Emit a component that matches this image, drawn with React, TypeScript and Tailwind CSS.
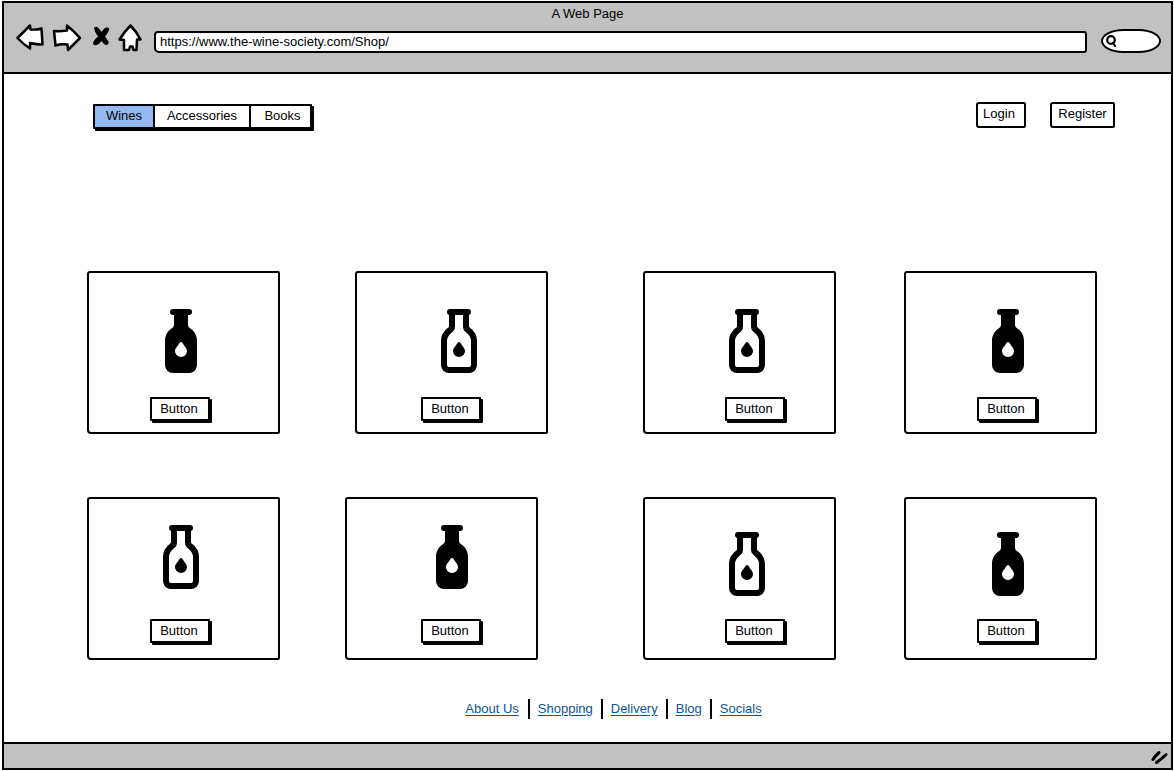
type Product = {
  id: number;
  filled: boolean;
  bottle: string;
  button: string;
};

const firstRow: Product[] = [
  { id: 1, filled: true, bottle: "mt-9 ml-[74px]", button: "mt-6 ml-[61px]" },
  { id: 2, filled: false, bottle: "mt-9 ml-[84px]", button: "mt-6 ml-16" },
  { id: 3, filled: false, bottle: "mt-9 ml-[84px]", button: "mt-6 ml-20" },
  { id: 4, filled: true, bottle: "mt-9 ml-[84px]", button: "mt-6 ml-[71px]" },
];

const secondRow: Product[] = [
  { id: 5, filled: false, bottle: "mt-[26px] ml-[74px]", button: "mt-[30px] ml-[61px]" },
  { id: 6, filled: true, bottle: "mt-[26px] ml-[87px]", button: "mt-[30px] ml-[74px]" },
  { id: 7, filled: false, bottle: "mt-[33px] ml-[84px]", button: "mt-[23px] ml-20" },
  { id: 8, filled: true, bottle: "mt-[33px] ml-[84px]", button: "mt-[23px] ml-[71px]" },
];

const links = ["About Us", "Shopping", "Delivery", "Blog", "Socials"];

const DROP = "M16.8 33.6a1.4 1.4 0 0 1 2.4 0C20.5 36.5 24 39 24 42.2a6 5.8 0 0 1-12 0C12 39 15.5 36.5 16.8 33.6Z";

function Bottle({ filled, className }: { filled: boolean; className: string }) {
  return (
    <svg viewBox="0 0 36 64" aria-hidden="true" className={`h-16 w-9 shrink-0 ${className}`}>
      {filled ? (
        <>
          <rect x="7" y="0" width="22" height="6" rx="3" />
          <path d="M11 3V15.5C11 17.5 10 18.5 8.5 19.5C4 22.5 2 27 2 32V56a8 8 0 0 0 8 8H26a8 8 0 0 0 8-8V32C34 27 32 22.5 27.5 19.5C26 18.5 25 17.5 25 15.5V3Z" />
          <path d={DROP} fill="#fff" />
        </>
      ) : (
        <>
          <rect x="6" y="0" width="24" height="6" rx="3" />
          <path
            d="M11 3V17.5C11 19 10.5 20 9 21C5 24 3 27.5 3 32V56a5 5 0 0 0 5 5H28a5 5 0 0 0 5-5V32C33 27.5 31 24 27 21C25.5 20 25 19 25 17.5V3"
            fill="none"
            stroke="#000"
            strokeWidth="6"
          />
          <path d={DROP} />
        </>
      )}
    </svg>
  );
}

function Card({ product }: { product: Product }) {
  return (
    <li className="flex h-[163px] w-[193px] flex-col items-start rounded-[3px_2px_2px_4px] border-2 border-black bg-white">
      <Bottle filled={product.filled} className={product.bottle} />
      <button
        type="button"
        className={`h-6 w-[60px] rounded-[1px] border-2 border-black bg-white pr-0.5 text-center leading-5 shadow-[2px_2px_0_0_#000] ${product.button}`}
      >
        Button
      </button>
    </li>
  );
}

function ToolbarIcons() {
  return (
    <div className="flex items-center">
      <button type="button" aria-label="Back" className="w-9">
        <svg viewBox="0 0 30 28" className="h-7 w-[30px]" fill="#fff" stroke="#000" strokeWidth="2.5" strokeLinejoin="round">
          <path d="M1.5 14L14 1.5L14.5 5.5Q21 6 25.5 4.5L26.5 20.5Q20 20.5 14 19L14 24.5Q7 20 1.5 14Z" />
        </svg>
      </button>
      <button type="button" aria-label="Forward" className="w-[38px]">
        <svg viewBox="0 0 30 28" className="h-7 w-[30px]" fill="#fff" stroke="#000" strokeWidth="2.5" strokeLinejoin="round">
          <path d="M2 7Q8 7.5 15 6.5V1.5Q22 7 28 14L16 26L15.5 20.5Q9 19.5 3.5 21.5Z" />
        </svg>
      </button>
      <button type="button" aria-label="Stop" className="w-7">
        <svg viewBox="0 0 20 28" className="h-7 w-5">
          <path d="M4 4Q6.5 1.500 9 4.500L11.500 8Q14 3.500 17 3.500Q20 3.500 19 6.500Q17.500 9.500 15 12.500L18.500 17.500Q19 21 16 21Q13.500 20 11.500 17Q9 20.500 6.500 21Q3 22 3 18.500Q4.500 15 8 12.500Q4.500 8.500 4 4Z" />
        </svg>
      </button>
      <button type="button" aria-label="Home" className="w-9">
        <svg viewBox="0 0 26 28" className="h-7 w-[26px]" fill="#fff" stroke="#000" strokeWidth="2.5" strokeLinejoin="round">
          <path d="M12.5 1.5Q18 7 22.5 15.5H19L18.5 26H15.5L14.5 22.5H12L11 26H6L6 16L1.5 15.5Q6 8 12.5 1.5Z" />
        </svg>
      </button>
    </div>
  );
}

export default function App() {
  return (
    <div className="min-h-screen bg-white pt-px pr-px pb-px pl-0.5 font-['Liberation_Sans',Arial,sans-serif] text-[13px] leading-4 text-black">
      <div className="flex min-h-[calc(100vh-2px)] flex-col border-2 border-black">
        <header className="border-b-2 border-black bg-[#c1c1c1] pt-[3px] pb-[18px]">
          <h1 className="text-center">A Web Page</h1>
          <div className="flex h-8 items-center pr-2.5 pl-3">
            <ToolbarIcons />
            <input
              aria-label="Address"
              type="text"
              defaultValue="https://www.the-wine-society.com/Shop/"
              className="mt-2 h-[22px] min-w-0 flex-1 rounded-[4px_3px_3px_5px] border-2 border-black bg-white pb-0.5 pl-1 outline-none"
            />
            <div className="mt-1.5 ml-3.5 flex h-6 w-[60px] items-center rounded-[24px/13px] border-2 border-black bg-white pl-0.5">
              <svg viewBox="0 0 12 12" aria-hidden="true" className="size-3 shrink-0" fill="none" stroke="#000" strokeWidth="2.2" strokeLinecap="round">
                <circle cx="6" cy="5" r="3.8" />
                <path d="M8 8L10 11" />
              </svg>
              <input aria-label="Search" type="search" className="w-9 min-w-0 bg-transparent outline-none" />
            </div>
          </div>
        </header>

        <main className="flex flex-1 flex-col">
          <div className="flex items-start justify-between pt-7 pr-14 pl-[89px]">
            <nav aria-label="Categories" className="mt-0.5 flex h-[25px] rounded-[1px] border-2 border-black bg-white shadow-[2px_2px_0_0_#000]">
              <button type="button" className="w-[60px] border-r-2 border-black bg-[#94b9f1] pb-0.5">Wines</button>
              <button type="button" className="w-24 border-r-2 border-black pb-0.5">Accessories</button>
              <button type="button" className="w-[59px] pb-0.5 pl-1">Books</button>
            </nav>
            <div className="flex gap-6">
              <button type="button" className="h-[26px] w-[50px] rounded-[3px_2px_2px_3px] border-2 border-black pr-1 pb-0.5">Login</button>
              <button type="button" className="h-[26px] w-[65px] rounded-[3px_2px_2px_3px] border-2 border-black pb-0.5">Register</button>
            </div>
          </div>

          <div className="flex flex-col gap-[63px] pt-[142px] pr-[74px] pl-[83px]">
            <ul className="grid grid-cols-[268fr_288fr_261fr_193fr]">
              {firstRow.map((p) => <Card key={p.id} product={p} />)}
            </ul>
            <ul className="grid grid-cols-[258fr_298fr_261fr_193fr]">
              {secondRow.map((p) => <Card key={p.id} product={p} />)}
            </ul>
          </div>

          <nav aria-label="Footer" className="mt-[39px] flex h-5 justify-center divide-x-2 divide-black pl-[52px] leading-5">
            {links.map((label) => (
              <span key={label} className="px-2 first:pr-[9px]">
                <a href="#" className="text-[#0f5594] underline underline-offset-2">{label}</a>
              </span>
            ))}
          </nav>
        </main>

        <footer className="flex h-[26px] items-end justify-end border-t-2 border-black bg-[#c1c1c1] pr-[3px] pb-1">
          <svg viewBox="0 0 18 14" aria-hidden="true" className="h-3.5 w-[18px]" fill="none" stroke="#000" strokeWidth="3" strokeLinecap="round">
            <path d="M3 9.5Q5 6 9 2.5M6.5 12.5Q11 9.5 16 4.5" />
          </svg>
        </footer>
      </div>
    </div>
  );
}
